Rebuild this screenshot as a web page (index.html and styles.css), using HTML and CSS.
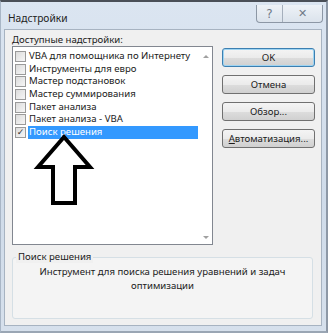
FILE: index.html
```html
<!DOCTYPE html>
<html>
<head>
  <meta charset="UTF-8">
  <title>Надстройки</title>
  <link rel="stylesheet" href="styles.css">
</head>
<body>
  <div class="window">
    <div class="titlebar">
      <span class="title">Надстройки</span>
      <div class="controls">
        <span class="ctl help">?</span>
        <span class="ctl close">&#x2715;</span>
      </div>
    </div>

    <div class="client">
      <div class="main">
        <div class="left">
          <div class="label">Доступные надстройки:</div>
          <div class="listbox">
            <ul class="items">
              <li><span class="check"></span><span class="name">VBA для помощника по Интернету</span></li>
              <li><span class="check"></span><span class="name">Инструменты для евро</span></li>
              <li><span class="check"></span><span class="name">Мастер подстановок</span></li>
              <li><span class="check"></span><span class="name">Мастер суммирования</span></li>
              <li><span class="check"></span><span class="name">Пакет анализа</span></li>
              <li><span class="check"></span><span class="name">Пакет анализа - VBA</span></li>
              <li class="selected"><span class="check checked">&#x2713;</span><span class="name">Поиск решения</span></li>
            </ul>
            <div class="scrollbar">
              <span class="arrow up"></span>
              <span class="arrow down"></span>
            </div>
            <!-- pointer drawn on top of the list -->
            <svg class="pointer" width="201" height="199" viewBox="0 0 201 199">
              <polygon points="51,90 25,120 40,120 40,156 62,156 62,120 77,120" fill="none" stroke="#000" stroke-width="4" stroke-linejoin="miter"/>
            </svg>
          </div>
        </div>
        <div class="buttons">
          <button class="btn default">OK</button>
          <button class="btn">Отмена</button>
          <button class="btn">Обзор...</button>
          <button class="btn"><u>А</u>втоматизация...</button>
        </div>
      </div>

      <div class="group">
        <div class="group-title">Поиск решения</div>
        <div class="group-body">Инструмент для поиска решения уравнений и задач<br>оптимизации</div>
      </div>
    </div>
  </div>
</body>
</html>
```

FILE: styles.css
```css
html, body {
  margin: 0;
  padding: 0;
}

body {
  width: 328px;
  height: 333px;
  font-family: "Noto Sans", "Open Sans", sans-serif;
  font-size: 9.6px;
  color: #1b1b1b;
  overflow: hidden;
}

.window {
  box-sizing: border-box;
  width: 328px;
  height: 333px;
  border-top: 2px solid #4a4f57;
  border-right: 2px solid #8d98a6;
  border-bottom: 2px solid #9aa6b4;
  border-left: 1px solid #a9b6c6;
  background: linear-gradient(to bottom, #dbe5f1, #cfdbe9 60%, #d6e0ec);
  display: flex;
  flex-direction: column;
}

.titlebar {
  height: 28px;
  display: flex;
  align-items: flex-start;
  justify-content: space-between;
}

.title {
  margin: 9px 0 0 7px;
  font-size: 10.2px;
  color: #222;
}

.controls {
  display: flex;
  margin: 3px 3px 0 0;
  border: 1px solid #8c97a5;
  border-top: none;
  border-radius: 0 0 4px 4px;
  background: linear-gradient(to bottom, #eef2f7, #dbe3ec);
  height: 17px;
}

.ctl {
  display: flex;
  align-items: center;
  justify-content: center;
  color: #6f7a88;
  font-family: "DejaVu Sans", sans-serif;
}

.help {
  width: 25px;
  border-right: 1px solid #a5afbc;
  font-size: 12px;
}

.close {
  width: 39px;
  font-size: 11px;
}

.client {
  box-sizing: border-box;
  margin: 0 4px 5px 3px;
  flex: 1;
  background: #f0f0f0;
  border: 1px solid #a7b3c1;
  padding: 4px 6px 6px 7px;
  display: flex;
  flex-direction: column;
}

.main {
  display: flex;
  gap: 9px;
}

.label {
  height: 12px;
  line-height: 12px;
  margin-bottom: 0;
}

.listbox {
  position: relative;
  box-sizing: border-box;
  width: 201px;
  height: 199px;
  border: 1px solid #828790;
  background: #fff;
  display: flex;
}

.items {
  list-style: none;
  margin: 0;
  padding: 3px 0 0 2px;
  flex: 1;
}

.items li {
  display: flex;
  align-items: center;
  height: 12.7px;
  line-height: 12.7px;
  white-space: nowrap;
}

.check {
  box-sizing: border-box;
  width: 11px;
  height: 11px;
  border: 1px solid #9a9a9a;
  background: linear-gradient(135deg, #dcdcdc, #f6f6f6);
  margin-right: 2px;
  font-size: 9px;
  line-height: 9px;
  text-align: center;
  color: #333;
  font-family: "DejaVu Sans", sans-serif;
}

.name {
  padding: 0 1px;
}

.selected .name {
  background: #3399ff;
  color: #fff;
  width: 168px;
}

.scrollbar {
  width: 15px;
  position: relative;
}

.arrow {
  position: absolute;
  left: 5px;
  width: 0;
  height: 0;
  border-left: 3px solid transparent;
  border-right: 3px solid transparent;
}

.arrow.up {
  top: 8px;
  border-bottom: 3px solid #a0a0a0;
}

.arrow.down {
  bottom: 5px;
  border-top: 3px solid #a0a0a0;
}

.pointer {
  position: absolute;
  left: 0;
  top: 0;
}

.buttons {
  display: flex;
  flex-direction: column;
  gap: 8px;
  padding-top: 14px;
}

.btn {
  box-sizing: border-box;
  width: 93px;
  height: 19px;
  padding: 0;
  font-family: inherit;
  font-size: 9.6px;
  color: #1b1b1b;
  border: 1px solid #707070;
  border-radius: 3px;
  background: linear-gradient(to bottom, #f4f4f4 0%, #ebebeb 50%, #dddddd 51%, #d0d0d0 100%);
}

.btn.default {
  border-color: #3c7fb1;
  box-shadow: inset 0 0 0 1px #9ed4f2;
}

.group {
  margin-top: 7px;
  margin-right: 2px;
  position: relative;
  flex: 1;
}

.group-title {
  position: absolute;
  top: -1px;
  left: 4px;
  padding: 0 2px;
  background: #f0f0f0;
  line-height: 12px;
}

.group-body {
  margin-top: 5px;
  box-sizing: border-box;
  height: 62px;
  border: 1px solid #d5dfe5;
  border-radius: 3px;
  background: #f4f4f4;
  text-align: center;
  padding-top: 7px;
  line-height: 14px;
}
```
